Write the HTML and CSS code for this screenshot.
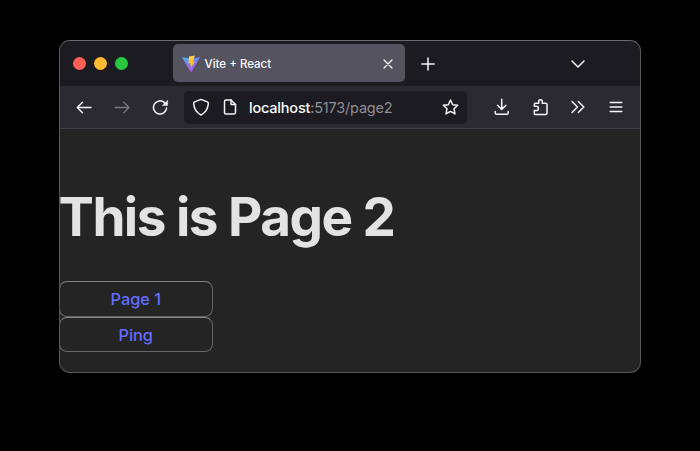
FILE: index.html
```html
<!DOCTYPE html>
<html lang="en">
<head>
<meta charset="utf-8">
<title>Vite + React</title>
<link rel="stylesheet" href="styles.css">
</head>
<body>
<div class="window">
  <header class="tabbar">
    <div class="lights"><span class="light red"></span><span class="light yellow"></span><span class="light green"></span></div>
    <div class="tab">
      <svg class="logo" width="18" height="18" viewBox="0 0 18 18">
        <defs>
          <linearGradient id="vite" x1="0" y1="0" x2=".6" y2="1"><stop offset="0" stop-color="#45b8f5"/><stop offset="1" stop-color="#b44df5"/></linearGradient>
          <linearGradient id="bolt" x1="0" y1="0" x2="0" y2="1"><stop offset="0" stop-color="#ffdc55"/><stop offset="1" stop-color="#ffa800"/></linearGradient>
        </defs>
        <path d="M.6 2.2 9 3.8l8.4-1.6q.5 0 .3.5L9.5 17q-.4.6-.8 0L.3 2.7q-.2-.5.3-.5z" fill="url(#vite)"/>
        <path d="M12.8.4 7 1.5l-.5 6.8 2-.4-.6 2.6 1.3-.3-.7 3.4 4.4-7-2 .3z" fill="url(#bolt)"/>
      </svg>
      <span class="tab-title">Vite + React</span>
      <svg class="icon thin" width="10" height="10" viewBox="0 0 10 10"><path d="m1 1 8 8M9 1 1 9"/></svg>
    </div>
    <svg class="icon plus" width="14" height="14" viewBox="0 0 14 14"><path d="M7 .9v12.200M.9 7h12.200"/></svg>
    <svg class="icon chevron" width="14" height="8" viewBox="0 0 14 8"><path d="m1 1 6 6 6-6"/></svg>
  </header>
  <nav class="toolbar">
    <div class="nav-icons">
      <svg class="icon" width="18" height="18" viewBox="0 0 18 18"><path d="M16 9.500H2.500M7.500 4.300 2.300 9.500l5.200 5.200"/></svg>
      <svg class="icon dim" width="18" height="18" viewBox="0 0 18 18"><path d="M2.300 9.500h13.500M10.800 4.300 16 9.500l-5.200 5.200"/></svg>
      <svg class="icon" width="18" height="18" viewBox="0 0 18 18"><path d="M15.600 10A6.600 6.600 0 1 1 13.500 4.600l1.600 1.600"/><path class="solid" d="M16.600 2.500v5h-5z"/></svg>
    </div>
    <div class="urlbar">
      <svg class="icon" width="18" height="18" viewBox="0 0 18 18"><path d="M9 1.400 15.400 3.900Q16.600 4.400 16.300 6 15.600 13.500 9 17 2.400 13.500 1.700 6q-.3-1.600.9-2.100z"/></svg>
      <svg class="icon page" width="14" height="16" viewBox="0 0 14 16"><path d="M3 1h5l4.500 4.500v8A1.500 1.500 0 0 1 11 15H3a1.500 1.500 0 0 1-1.500-1.500v-11A1.500 1.500 0 0 1 3 1z"/><path d="M8 1v4.500h4.500"/></svg>
      <span class="url"><b>localhost</b>:5173/page2</span>
      <svg class="icon" width="18" height="18" viewBox="0 0 18 18"><path d="m9.500 2 2.200 4.700 5 .6-3.700 3.500 1 5.100-4.500-2.500L5 15.900l1-5.100-3.700-3.500 5-.6z"/></svg>
    </div>
    <div class="tools">
      <svg class="icon" width="16" height="18" viewBox="0 0 16 18"><path d="M7.700 1.200v10M3.500 7.200l4.200 4.200 4.200-4.200M1.200 13.500v1.300q0 1.500 1.500 1.500h10q1.500 0 1.500-1.500v-1.300"/></svg>
      <svg class="icon" width="16" height="18" viewBox="0 0 16 18"><path d="M1.300 8.300V6.300Q1.300 5.200 2.500 5.200h3.200V3.500a1.800 1.800 0 0 1 3.600 0v1.700h3.300q1.400 0 1.400 1.400v8.600q0 1.400-1.400 1.400H2.700q-1.400 0-1.400-1.400v-2.700h2a2.100 2.100 0 0 0 0-4.200z"/></svg>
      <svg class="icon" width="16" height="14" viewBox="0 0 16 14"><path d="M2 1.500 7.500 7 2 12.500M8.300 1.500 13.800 7l-5.500 5.500"/></svg>
      <svg class="icon" width="14" height="12" viewBox="0 0 14 12"><path d="M1.200 1.500h11.600M1.200 6h11.600M1.200 10.500h11.600"/></svg>
    </div>
  </nav>
  <main class="content">
    <h1>This is Page 2</h1>
    <a class="button">Page 1</a>
    <a class="button">Ping</a>
  </main>
</div>
</body>
</html>
```
FILE: styles.css
```css
* { box-sizing: border-box; }
body {
  margin: 0;
  height: 451px;
  padding: 40px 59px;
  background: #000;
  font-family: Inter, "Liberation Sans", sans-serif;
}
.window {
  width: 582px;
  height: 333px;
  border: 1px solid #55555a;
  border-top-color: #6a6a6e;
  border-radius: 11px;
  background: #242424;
  overflow: hidden;
}
svg { display: block; flex: none; }
.icon {
  fill: none;
  stroke: #f5f5f8;
  stroke-width: 1.5;
  stroke-linecap: round;
  stroke-linejoin: round;
}
.thin { stroke-width: 1.3; }
.dim { stroke: #77767e; }
.solid { fill: #f5f5f8; stroke-width: .5; }
.tabbar {
  display: flex;
  align-items: center;
  height: 45px;
  background: #1c1b22;
}
.lights { display: flex; gap: 8px; margin-left: 12.500px; }
.light { width: 13px; height: 13px; border-radius: 50%; }
.red { background: #ff5f57; }
.yellow { background: #febc2e; }
.green { background: #28c840; }
.tab {
  display: flex;
  align-items: center;
  width: 232.500px;
  height: 38px;
  margin: 0 0 1px 45px;
  padding: 1px 12px 0 9px;
  border-radius: 5px;
  background: #55535f;
}
.tab-title {
  flex: 1;
  margin-left: 5px;
  color: #fbfbfe;
  font-size: 11.500px;
  font-weight: 550;
  white-space: nowrap;
}
.plus { margin-left: 16px; }
.chevron { margin: 0 55.500px 0 auto; }
.toolbar {
  display: flex;
  align-items: center;
  height: 43px;
  border-bottom: 1px solid #424149;
  background: #2b2a33;
}
.nav-icons { display: flex; gap: 20px; margin-left: 15px; }
.urlbar {
  display: flex;
  align-items: center;
  width: 283px;
  height: 33px;
  margin-left: 15px;
  padding: 0 8px;
  border-radius: 5px;
  background: #1c1b22;
}
.page { margin-left: 13px; }
.url {
  flex: 1;
  margin-left: 12px;
  padding-top: 1px;
  color: #8f8e95;
  font-size: 14.500px;
  letter-spacing: -.2px;
  white-space: nowrap;
}
.url b { color: #fbfbfe; font-weight: 500; }
.tools { display: flex; align-items: center; gap: 22.500px; margin-left: 27px; }
.tools :nth-child(3) { margin-left: -1px; }
.content { padding-top: 57px; }
h1 {
  margin: 0 0 32px -1.500px;
  color: #e3e3e3;
  font-size: 53px;
  font-weight: 700;
  line-height: 63px;
  letter-spacing: -1.500px;
  white-space: nowrap;
}
.button {
  display: block;
  width: 153.500px;
  height: 35.700px;
  margin-left: -1px;
  border: 1px solid #656565;
  border-top-color: #858585;
  border-radius: 8px;
  color: #646cff;
  font-size: 16.300px;
  font-weight: 500;
  line-height: 35px;
  text-align: center;
}
```
